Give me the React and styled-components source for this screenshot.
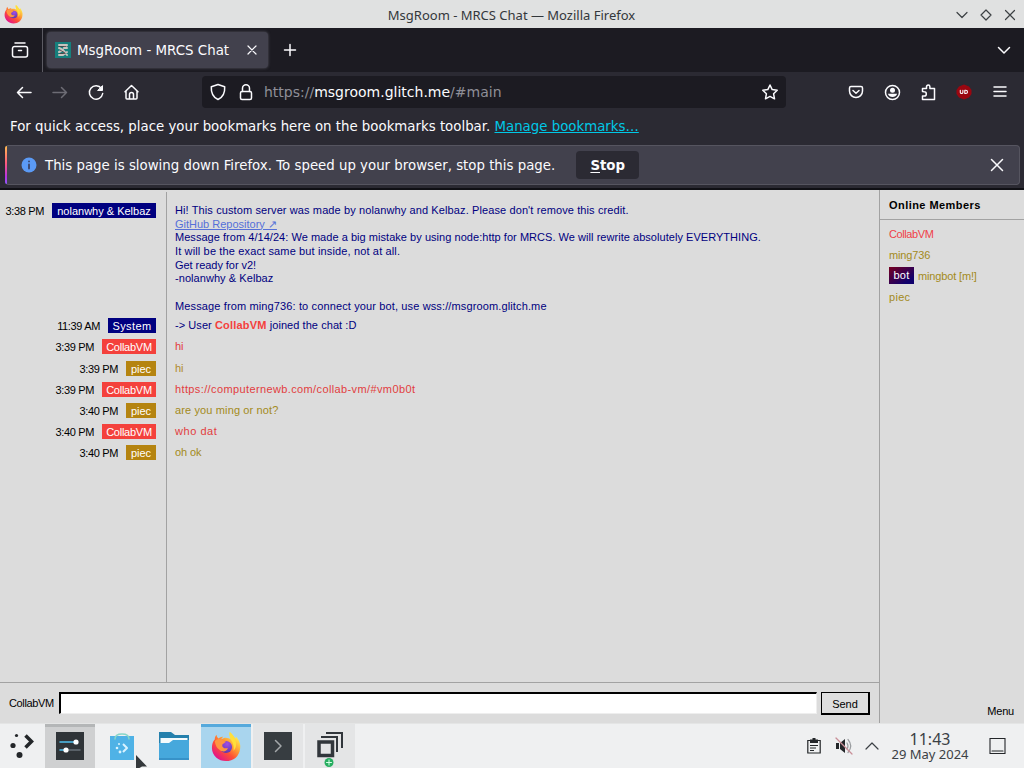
import React from 'react';
import styled, { createGlobalStyle, css } from 'styled-components';

const GlobalStyle = createGlobalStyle`
    * {
        box-sizing: border-box;
    }
    body {
        margin: 0;
        overflow: hidden;
        background: #dcdcdc;
    }
`

const Screen = styled.div`
    display: flex;
    flex-direction: column;
    width: 1024px;
    height: 768px;
    overflow: hidden;
    font-family: "DejaVu Sans", sans-serif;
    white-space: nowrap;
`

const Icon = styled.svg`
    display: block;
    flex: none;
    fill: none;
    stroke: ${props => props.$color || '#fbfbfe'};
    stroke-width: ${props => props.$weight || 1.5};
    stroke-linecap: round;
    stroke-linejoin: round;
    overflow: visible;
`

/* window frame */
const TitleBar = styled.header`
    display: grid;
    grid-template-columns: 100px 1fr 100px;
    align-items: center;
    height: 28px;
    flex: none;
    padding: 1px 8px 0 4px;
    background: #e0e1e1;
`

const WindowTitle = styled.div`
    padding-left: 3px;
    text-align: center;
    font: 13px/26px "Noto Sans", sans-serif;
    color: #33373b;
`

const WindowButtons = styled.div`
    display: flex;
    justify-content: flex-end;
    gap: 12px;
`

const TabStrip = styled.div`
    display: flex;
    align-items: center;
    height: 44px;
    flex: none;
    background: #1c1b22;
`

const FirefoxView = styled.div`
    display: flex;
    align-items: center;
    width: 43px;
    height: 44px;
    padding-left: 10px;
    border-right: 1px solid #5c5b63;
`

const Tab = styled.div`
    display: flex;
    align-items: center;
    width: 221px;
    height: 36px;
    margin-left: 4px;
    padding: 0 10px 0 8px;
    border-radius: 4px;
    background: #42414d;
    box-shadow: 0 0 3px rgba(128,128,142,0.6);
`

const TabLabel = styled.span`
    flex: 1;
    margin-left: 6px;
    font-size: 13.4px;
    color: #fbfbfe;
`

const NewTab = styled.div`
    flex: 1;
    padding-left: 14px;
`

const TabList = styled.div`
    padding-right: 12px;
`

const NavBar = styled.div`
    display: flex;
    align-items: center;
    height: 41px;
    flex: none;
    padding: 0 14px 1px 14px;
    background: #2b2a33;
`

const NavGroup = styled.div`
    display: flex;
    align-items: center;
    gap: 16px;
    width: 188px;
`

const UrlBar = styled.div`
    display: flex;
    align-items: center;
    width: 584px;
    height: 32px;
    padding: 0 7px 0 6px;
    gap: 8px;
    border-radius: 4px;
    background: #1c1b22;
`

const Url = styled.div`
    flex: 1;
    font-size: 14px;
    color: #8f8f98;

    b {
        font-weight: normal;
        color: #fbfbfe;
    }
`

const Extensions = styled.div`
    display: flex;
    flex: 1;
    justify-content: flex-end;
    gap: 16px;
`

const BookmarksBar = styled.div`
    height: 32px;
    flex: none;
    padding: 0 10px;
    background: #2b2a33;
    font-size: 13.33px;
    line-height: 27px;
    color: #fbfbfe;

    a {
        color: #00c8e6;
        text-decoration: underline;
    }
`

const NoticeWrap = styled.div`
    height: 45px;
    flex: none;
    padding: 0 4px 4px 5px;
    background: #2b2a33;
    border-bottom: 2px solid #101015;
`

const Notice = styled.div`
    display: flex;
    align-items: center;
    height: 40px;
    padding-right: 14px;
    border: 1px solid #565560;
    border-left: 0;
    border-radius: 4px;
    background: #42414d;
    color: #fbfbfe;
    font-size: 13.33px;
`

const NoticeStripe = styled.div`
    width: 2px;
    height: 38px;
    margin-right: 14px;
    border-radius: 3px 0 0 3px;
    background: linear-gradient(#ffbd4f, #ff5a7c 45%, #b833e1 80%, #9059ff);
`

const NoticeText = styled.span`
    margin-left: 8px;
`

const StopButton = styled.button`
    width: 63px;
    height: 28px;
    margin: 0 auto 0 21px;
    padding: 0;
    border: 0;
    border-radius: 4px;
    background: #2b2a33;
    color: #fbfbfe;
    font: bold 13.33px "DejaVu Sans", sans-serif;

    u {
        text-underline-offset: 2px;
    }
`

/* chat page */
const Page = styled.main`
    display: flex;
    flex: 1;
    min-height: 0;
    background: #dcdcdc;
    color: #000;
    font-family: "Liberation Sans", Arial, sans-serif;
    font-size: 11px;
`

const Chat = styled.section`
    display: flex;
    flex-direction: column;
    width: 880px;
    border-right: 1px solid #a2a2a2;
`

const Log = styled.div`
    display: flex;
    flex-direction: column;
    flex: 1;
    padding-top: 2px;
`

const Row = styled.div`
    display: grid;
    grid-template-columns: 166px 1fr;
    flex: ${props => props.$fill ? 1 : 'none'};
    height: ${props => props.$height || 21.2}px;
`

const Meta = styled.div`
    display: flex;
    justify-content: flex-end;
    align-items: flex-start;
    gap: 8px;
    padding: 3px 10px 0 0;
    line-height: 16px;
`

const Time = styled.span`
    letter-spacing: -0.35px;
`

const Name = styled.span`
    height: 15px;
    width: ${props => props.$width}px;
    text-align: center;
    line-height: 16px;
    letter-spacing: ${props => props.$spacing || 0}px;
    background: ${props => props.$color};
    color: #fff;
`

const Message = styled.div`
    padding: 4px 0 0 8px;
    border-left: 1px solid #a2a2a2;
    line-height: 13.7px;
    color: ${props => props.$color};

    a {
        color: #5570d8;
        text-decoration: underline;
    }
    strong {
        color: #f4413c;
        letter-spacing: 0.2px;
    }
`

const Line = styled.div`
    height: 13.7px;
    letter-spacing: ${props => props.$spacing || 0}px;
`

const Composer = styled.form`
    display: flex;
    align-items: center;
    height: 41px;
    padding: 0 9px;
    border-top: 1px solid #a2a2a2;
`

const Nick = styled.label`
    width: 50px;
    letter-spacing: -0.35px;
`

const TextBox = styled.input`
    flex: 1;
    height: 22px;
    padding: 0 4px;
    border: 2px solid #000;
    border-right: 1px solid #eee;
    border-bottom: 1px solid #eee;
    background: #fff;
    outline: none;
`

const SendButton = styled.button`
    width: 49px;
    height: 23px;
    margin-left: 4px;
    padding: 2px 0 0;
    border: 1px solid #000;
    border-right-width: 2px;
    border-bottom-width: 2px;
    background: #dedede;
    color: #000;
    font: 11px "Liberation Sans", Arial, sans-serif;
`

const Members = styled.aside`
    display: flex;
    flex-direction: column;
    flex: 1;
`

const MembersTitle = styled.h2`
    height: 30px;
    margin: 0 0 3px;
    padding-left: 9px;
    border-bottom: 1px solid #a2a2a2;
    font-size: 11px;
    line-height: 30px;
    letter-spacing: 0.45px;
`

const Member = styled.div`
    display: flex;
    align-items: center;
    gap: 4px;
    height: 21px;
    padding-left: 9px;
    letter-spacing: ${props => props.$spacing || 0}px;
    color: ${props => props.$color};
`

const BotTag = styled.span`
    width: 25px;
    height: 17px;
    line-height: 17px;
    letter-spacing: 0.3px;
    text-align: center;
    background: linear-gradient(to bottom right, #780020, #10006c 80%);
    color: #fff;
`

const MenuLink = styled.div`
    margin-top: auto;
    padding: 0 10px 6px 0;
    text-align: right;
    letter-spacing: -0.2px;
`

/* panel */
const Taskbar = styled.footer`
    display: flex;
    height: 45px;
    flex: none;
    background: #eff0f1;
    border-top: 1px solid #e4e5e5;
`

const Task = styled.div`
    display: flex;
    justify-content: center;
    padding-top: 8px;
    width: ${props => props.$width || 50}px;
    margin-right: 2px;
    background: ${props => props.$bg || 'transparent'};
    ${props => props.$line && css`
        box-shadow: inset 0 3px ${props.$line};
    `}
`

const Tray = styled.div`
    display: flex;
    align-items: center;
    margin-left: auto;
    padding-right: 18px;
`

const Clock = styled.div`
    width: 84px;
    margin: 0 17px 0 10px;
    text-align: center;
    color: #3b4045;
    font-family: "Noto Sans", sans-serif;
    font-size: 13px;
    line-height: 14px;
`

const Hours = styled.div`
    font-size: 16px;
    line-height: 15px;
`

const Cursor = styled.svg`
    position: absolute;
    left: 135px;
    top: 755px;
`

const FirefoxLogo = ({ size, id }) => (
    <Icon width={size} height={size} viewBox="0 0 32 32" style={{ stroke: 'none' }}>
        <defs>
            <linearGradient id={id + 'body'} x1="0.85" y1="0.1" x2="0.2" y2="0.9">
                <stop offset="0" stopColor="#fff44f" />
                <stop offset="0.35" stopColor="#ffa436" />
                <stop offset="0.65" stopColor="#ff5034" />
                <stop offset="1" stopColor="#e31587" />
            </linearGradient>
            <radialGradient id={id + 'globe'} cx="0.6" cy="0.25" r="0.8">
                <stop offset="0" stopColor="#a14de8" />
                <stop offset="1" stopColor="#5639a8" />
            </radialGradient>
        </defs>
        <path fill={`url(#${id}body)`} d="M4 8C4 5 5 4 6 3c0 2 1 3 2 4 2-2 4-2 5-2-1 1-2 2-2 3 3-3 8-2 10 0 0-3-2-5-1-8 2 2 5 5 6 7l1-2c3 4 5 8 4 13-1 8-7 13-15 13S1 25 1 17c0-4 1-7 3-9z" />
        <circle cx="16" cy="16" r="6.500" fill={`url(#${id}globe)`} />
        <path fill="#ff9640" d="M4 10c2-3 5-3 8-2 1 1 2 2 4 2-1 2-4 2-4 4 0 3 3 4 6 3-1 4-6 5-9 2-3-2-4-5-5-9z" />
        <path fill="#ffdf3a" d="M21 8c-1-3-2-5-1-8 3 2 5 6 6 9 2 5 0 9-2 11 1-5-1-9-3-12z" />
    </Icon>
)

const messages = [
    { time: '11:39 AM', name: 'System', width: 48, badge: '#000080', color: '#000080', system: true, nameSpacing: 0.4, spacing: 0.06 },
    { time: '3:39 PM', name: 'CollabVM', width: 54, badge: '#f4413c', color: '#e23c40', text: 'hi', nameSpacing: -0.25 },
    { time: '3:39 PM', name: 'piec', width: 30, badge: '#b58410', color: '#b08a2c', text: 'hi' },
    { time: '3:39 PM', name: 'CollabVM', width: 54, badge: '#f4413c', color: '#e23c40', text: 'https://computernewb.com/collab-vm/#vm0b0t', nameSpacing: -0.25, spacing: 0.38 },
    { time: '3:40 PM', name: 'piec', width: 30, badge: '#b58410', color: '#a38a20', text: 'are you ming or not?', spacing: 0.13 },
    { time: '3:40 PM', name: 'CollabVM', width: 54, badge: '#f4413c', color: '#e23c40', text: 'who dat', nameSpacing: -0.25, spacing: 0.55 },
    { time: '3:40 PM', name: 'piec', width: 30, badge: '#b58410', color: '#a38a20', text: 'oh ok', spacing: -0.1 },
]

const BrowserChrome = () => (
    <>
        <TitleBar>
            <FirefoxLogo size={19} id="title" />
            <WindowTitle>MsgRoom - MRCS Chat — Mozilla Firefox</WindowTitle>
            <WindowButtons>
                <Icon $color="#3c4043" $weight={1.2} width="12" height="12" viewBox="0 0 12 12"><path d="M1 3.5l5 5 5-5" /></Icon>
                <Icon $color="#3c4043" $weight={1.2} width="12" height="12" viewBox="0 0 12 12"><path d="M6 1l5 5-5 5-5-5z" /></Icon>
                <Icon $color="#3c4043" $weight={1.2} width="12" height="12" viewBox="0 0 12 12"><path d="M1.5 1.5l9 9m0-9l-9 9" /></Icon>
            </WindowButtons>
        </TitleBar>
        <TabStrip>
            <FirefoxView>
                <Icon width="20" height="20" viewBox="0 0 20 20"><path d="M5 3h10M4.500 6.500h11a2 2 0 0 1 2 2V15a2 2 0 0 1-2 2h-11a2 2 0 0 1-2-2V8.500a2 2 0 0 1 2-2zM8.500 10.500h3" /></Icon>
            </FirefoxView>
            <Tab>
                <Icon width="16" height="16" viewBox="0 0 16 16">
                    <path fill="#16807d" stroke="none" d="M0 0h16v16H0z" />
                    <path stroke="#c9c3be" strokeWidth="2" d="M4 3h8L9 6h3M4 6l4 2-4 2M4 13h4l4-3M9 9l3 4" />
                    <path stroke="#4c3d40" strokeWidth="0.8" d="M4 4.500h7M5 8l5 3M5 11.500h5" />
                </Icon>
                <TabLabel>MsgRoom - MRCS Chat</TabLabel>
                <Icon $weight={1.2} width="12" height="12" viewBox="0 0 12 12"><path d="M2 2l8 8m0-8l-8 8" /></Icon>
            </Tab>
            <NewTab>
                <Icon width="16" height="16" viewBox="0 0 16 16"><path d="M8 2.500v11M2.500 8h11" /></Icon>
            </NewTab>
            <TabList>
                <Icon width="16" height="16" viewBox="0 0 16 16"><path d="M2.500 5.500L8 11l5.500-5.500" /></Icon>
            </TabList>
        </TabStrip>
        <NavBar>
            <NavGroup>
                <Icon width="20" height="20" viewBox="0 0 20 20"><path d="M17 10.500H3.500m5-5l-5 5 5 5" /></Icon>
                <Icon $color="#6d6c75" width="20" height="20" viewBox="0 0 20 20"><path d="M3 10.500h13.500m-5-5l5 5-5 5" /></Icon>
                <Icon width="20" height="20" viewBox="0 0 20 20"><path d="M15.500 6.500A6.700 6.700 0 1 0 16.700 11.500" /><path fill="#fbfbfe" strokeWidth="1" d="M16.500 4v4.500H12z" /></Icon>
                <Icon width="20" height="20" viewBox="0 0 20 20"><path d="M3 9.800l6.500-6.300 6.500 6.300M4 9V16a1 1 0 0 0 1 1h9a1 1 0 0 0 1-1V9M7.500 16.500V12.500a2 2 0 0 1 4 0v4" /></Icon>
            </NavGroup>
            <UrlBar>
                <Icon width="20" height="20" viewBox="0 0 20 20"><path d="M10 2.500l6.700 2.300c.3 5-1 10.200-6.700 12.700C4.300 15 3 9.800 3.300 4.800z" /></Icon>
                <Icon width="20" height="20" viewBox="0 0 20 20"><rect x="4.500" y="9.500" width="11" height="8" rx="1.500" /><path d="M6.500 9.500V6.300a3.500 3.500 0 0 1 7 0v3.200" /></Icon>
                <Url>https://<b>msgroom.glitch.me</b>/#main</Url>
                <Icon width="18" height="18" viewBox="0 0 18 18"><path d="M9 2l2.200 4.600 5 .7-3.600 3.500.9 5L9 13.400l-4.500 2.400.9-5L1.800 7.300l5-.7z" /></Icon>
            </UrlBar>
            <Extensions>
                <Icon width="20" height="20" viewBox="0 0 20 20"><path d="M5 4.500h10a1.500 1.500 0 0 1 1.500 1.500V9a6.500 6.500 0 0 1-13 0V6A1.500 1.500 0 0 1 5 4.500zM7 8.500l3 2.700 3-2.700" /></Icon>
                <Icon width="20" height="20" viewBox="0 0 20 20"><circle cx="10.500" cy="10.500" r="7" /><circle cx="10.500" cy="8.200" r="2.500" fill="#fbfbfe" stroke="none" /><path fill="#fbfbfe" stroke="none" d="M5.900 11.700h9.200c-.8 2.300-2.400 3.300-4.600 3.300s-3.800-1-4.600-3.300z" /></Icon>
                <Icon width="20" height="20" viewBox="0 0 20 20"><path d="M4.500 9.500V6.500h4V4.800a1.700 1.700 0 0 1 3.400 0v1.700h4.600v11h-12V14h1.700a2 2 0 0 0 0-4.200z" /></Icon>
                <Icon width="20" height="20" viewBox="0 0 20 20">
                    <path fill="#9a0610" stroke="none" d="M10 2.500l5 2 2.500 3.500v4l-2.500 3.500-5 2-5-2L2.500 12V8L5 4.500z" />
                    <path strokeWidth="1.100" d="M6.300 8.300v2.200q0 1 1.300 1t1.300-1V8.300M10.800 8.300h.9q1.800 0 1.800 1.600t-1.800 1.600h-.9z" />
                </Icon>
                <Icon width="20" height="20" viewBox="0 0 20 20"><path d="M4 5h12M4 9.500h12M4 14h12" /></Icon>
            </Extensions>
        </NavBar>
        <BookmarksBar>
            For quick access, place your bookmarks here on the bookmarks toolbar. <a>Manage bookmarks…</a>
        </BookmarksBar>
        <NoticeWrap>
            <Notice>
                <NoticeStripe />
                <Icon width="16" height="16" viewBox="0 0 16 16">
                    <circle cx="8" cy="8" r="7.500" fill="#5b9af5" stroke="none" />
                    <path stroke="#3a4368" strokeWidth="1.800" d="M8 7.500v4M8 4.300v.1" />
                </Icon>
                <NoticeText>This page is slowing down Firefox. To speed up your browser, stop this page.</NoticeText>
                <StopButton><u>S</u>top</StopButton>
                <Icon width="16" height="16" viewBox="0 0 16 16"><path d="M2.500 2.500l11 11m0-11l-11 11" /></Icon>
            </Notice>
        </NoticeWrap>
    </>
)

const ChatPage = () => (
    <Page>
        <Chat>
            <Log>
                <Row $height={8}><Meta /><Message /></Row>
                <Row $height={115.3}>
                    <Meta><Time>3:38 PM</Time><Name $color="#000080" $width={104}>nolanwhy &amp; Kelbaz</Name></Meta>
                    <Message $color="#000080">
                        <Line $spacing={0.11}>Hi! This custom server was made by nolanwhy and Kelbaz. Please don't remove this credit.</Line>
                        <Line><a>GitHub Repository ↗</a></Line>
                        <Line $spacing={0.04}>Message from 4/14/24: We made a big mistake by using node:http for MRCS. We will rewrite absolutely EVERYTHING.</Line>
                        <Line $spacing={0.14}>It will be the exact same but inside, not at all.</Line>
                        <Line $spacing={-0.05}>Get ready for v2!</Line>
                        <Line $spacing={0.06}>-nolanwhy &amp; Kelbaz</Line>
                        <Line />
                        <Line $spacing={0.13}>Message from ming736: to connect your bot, use wss://msgroom.glitch.me</Line>
                    </Message>
                </Row>
                {messages.map((msg, i) => (
                    <Row key={i}>
                        <Meta>
                            <Time>{msg.time}</Time>
                            <Name $color={msg.badge} $width={msg.width} $spacing={msg.nameSpacing}>{msg.name}</Name>
                        </Meta>
                        <Message $color={msg.color}>
                            <Line $spacing={msg.spacing}>
                                {msg.system ? <>-&gt; User <strong>CollabVM</strong> joined the chat :D</> : msg.text}
                            </Line>
                        </Message>
                    </Row>
                ))}
                <Row $fill><Meta /><Message /></Row>
            </Log>
            <Composer>
                <Nick>CollabVM</Nick>
                <TextBox />
                <SendButton type="button">Send</SendButton>
            </Composer>
        </Chat>
        <Members>
            <MembersTitle>Online Members</MembersTitle>
            <Member $color="#f04048" $spacing={-0.4}>CollabVM</Member>
            <Member $color="#a38a20" $spacing={-0.15}>ming736</Member>
            <Member $color="#a38a20" $spacing={-0.15}><BotTag>bot</BotTag>mingbot [m!]</Member>
            <Member $color="#a38a20" $spacing={0.3}>piec</Member>
            <MenuLink>Menu</MenuLink>
        </Members>
    </Page>
)

const Panel = () => (
    <Taskbar>
        <Task $width={43}>
            <Icon width="28" height="28" viewBox="0 0 28 28">
                <g fill="#232629" stroke="none"><circle cx="8.500" cy="3.500" r="1.600" /><circle cx="5" cy="13.500" r="2.600" /><circle cx="11.500" cy="23" r="3" /></g>
                <path stroke="#232629" strokeWidth="3.500" strokeLinecap="butt" strokeLinejoin="miter" d="M17.500 3.500l6 6-6 6" />
            </Icon>
        </Task>
        <Task $bg="#cfd0d1" $line="#b4b6b7">
            <Icon width="28" height="28" viewBox="0 0 28 28">
                <path fill="#2f3438" stroke="none" d="M0 0h28v28H0z" />
                <path stroke="#50c0ee" d="M4 10h15M4 18h4" /><path stroke="#687078" d="M11 18h13" />
                <circle cx="20" cy="10" r="2.600" fill="#fff" stroke="none" /><circle cx="10" cy="18" r="2.600" fill="#fff" stroke="none" />
            </Icon>
        </Task>
        <Task>
            <Icon width="28" height="28" viewBox="0 0 28 28">
                <path fill="#4fb2e6" stroke="none" d="M2 4h24v24H2z" />
                <path stroke="#86d6c8" strokeWidth="1.500" d="M7 7q0-5 7-5t7 5" />
                <path stroke="#d9f3ff" strokeWidth="2" strokeLinecap="butt" d="M15 12l4 4-4 4" />
                <g fill="#d9f3ff" stroke="none"><circle cx="11" cy="12" r="1" /><circle cx="9" cy="16" r="1.300" /><circle cx="12" cy="20" r="1.400" /></g>
            </Icon>
        </Task>
        <Task>
            <Icon width="30" height="28" viewBox="0 0 30 28">
                <path fill="#2580ac" stroke="none" d="M0 0h12l4 3h14v10H0z" />
                <path fill="#f4fafc" stroke="none" d="M1.500 6h27v8h-27z" />
                <path fill="#46a8dc" stroke="none" d="M0 11h10l4-3h16v20H0z" />
                <path fill="#3792c8" stroke="none" d="M0 26h30v2H0z" />
            </Icon>
        </Task>
        <Task $bg="#a9d5ee" $line="#55a9dc"><FirefoxLogo size={30} id="task" /></Task>
        <Task $bg="#e4e5e6">
            <Icon width="28" height="28" viewBox="0 0 28 28">
                <path fill="#373d41" stroke="none" d="M0 0h28v28H0z" />
                <path stroke="#a3a8aa" d="M11.500 8.500l5.500 5.500-5.500 5.500" />
            </Icon>
        </Task>
        <Task $bg="#e4e5e6">
            <Icon width="28" height="36" viewBox="0 0 28 36">
                <path stroke="#31363b" strokeWidth="3.500" strokeLinejoin="miter" d="M3 10h13.500v13.500H3z" />
                <path stroke="#31363b" strokeWidth="2" strokeLinecap="butt" strokeLinejoin="miter" d="M5 5h16v15M10 1h16v15" />
                <circle cx="13" cy="30.500" r="4.500" fill="#27ae60" stroke="none" />
                <path stroke="#d8ffe8" strokeWidth="1" d="M13 28v5M10.500 30.500h5" />
            </Icon>
        </Task>
        <Tray>
            <Icon $color="#232629" $weight={1.2} width="14" height="16" viewBox="0 0 14 16">
                <path strokeLinejoin="miter" d="M.8 2.500h12.400v12.500H.8z" />
                <path fill="#232629" stroke="none" d="M3 1.500h2.500V0h3v1.500H11V5H3z" />
                <path strokeLinecap="butt" d="M3 7.500h8M3 10h6M3 12.500h4" />
            </Icon>
            <Icon $color="#9a9da0" $weight={1.2} style={{ marginLeft: 14 }} width="18" height="18" viewBox="0 0 18 18">
                <path fill="#232629" stroke="none" d="M1 6h3v6H1zM5 6l5-4v14l-5-4z" />
                <path d="M12 6q2 3 0 6M13 2.500q5.500 6.500 0 13" />
                <path stroke="#c98f98" d="M1 1l16 16" />
            </Icon>
            <Icon $color="#3b4045" $weight={1.2} style={{ marginLeft: 13 }} width="12" height="12" viewBox="0 0 12 12"><path d="M0 9l6-6 6 6" /></Icon>
            <Clock>
                <Hours>11:43</Hours>
                <div>29 May 2024</div>
            </Clock>
            <Icon $color="#232629" $weight={1.1} width="17" height="16" viewBox="0 0 17 16"><path strokeLinejoin="miter" d="M1 .5h15v15H1zM3 13h11" /></Icon>
        </Tray>
    </Taskbar>
)

export default function App() {
    return (
        <Screen>
            <GlobalStyle />
            <BrowserChrome />
            <ChatPage />
            <Panel />
            <Cursor width="12" height="15" viewBox="0 0 12 15">
                <path fill="#34383b" d="M1 0l11 11.500H7L1 15z" />
            </Cursor>
        </Screen>
    )
}
